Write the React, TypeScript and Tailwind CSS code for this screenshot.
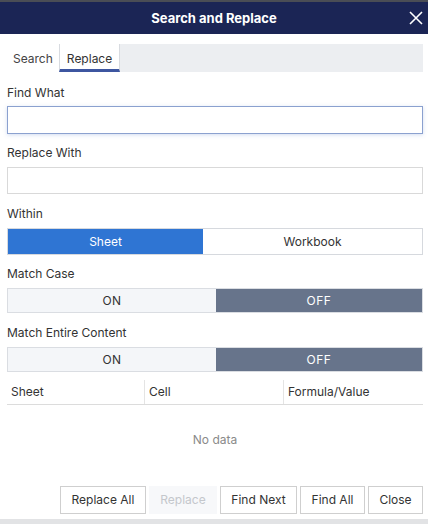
import React from "react";

const font = { fontFamily: "Inter, 'Noto Sans', sans-serif" };

function Seg({ left, right, blue }: { left: string; right: string; blue?: boolean }) {
  if (blue) {
    return (
      <div className="flex h-[27px] border border-[#d6d9de]">
        <div className="w-[195px] flex items-center justify-center bg-[#2f75d3] text-white">{left}</div>
        <div className="flex-1 flex items-center justify-center bg-white text-[#333]">{right}</div>
      </div>
    );
  }
  return (
    <div className="flex h-[25px] border border-[#dadde2] tracking-[0.5px]">
      <div className="w-[208px] flex items-center justify-center bg-[#f4f6f9] text-[#333]">{left}</div>
      <div className="flex-1 flex items-center justify-center bg-[#67748b] text-white">{right}</div>
    </div>
  );
}

export default function App() {
  return (
    <div style={font} className="w-[428px] h-[524px] bg-white flex flex-col text-[12px] leading-4 text-[#333] relative overflow-hidden">
      <div className="h-[2px] bg-[#4a4d55]" />
      <div className="h-[32px] bg-[#1b2555] flex items-center justify-center relative">
        <span className="text-white font-bold text-[13px]">Search and Replace</span>
        <svg className="absolute right-[4px] top-[8px]" width="16" height="16" viewBox="0 0 16 16">
          <path d="M2 2 L14 14 M14 2 L2 14" stroke="white" strokeWidth="1.6" />
        </svg>
      </div>
      <div className="pl-[7px] pr-[5px] pt-[10px]">
        <div className="flex h-[28px]">
          <div className="px-[6px] pt-[2px] flex items-center text-[#444]">Search</div>
          <div className="px-[7px] flex items-center border-l border-r border-[#d8dbe0] border-b-[3px] border-b-[#3d56a0] pt-[4px] text-[#333]">Replace</div>
          <div className="flex-1 bg-[#eceef1]" />
        </div>
        <div className="mt-[13px]">Find What</div>
        <div className="mt-[5px] h-[28px] border border-[#8ba1cf] shadow-[0_1px_4px_rgba(80,120,200,0.25)]" />
        <div className="mt-[11px]">Replace With</div>
        <div className="mt-[6px] h-[27px] border border-[#d9d9d9]" />
        <div className="mt-[12px]">Within</div>
        <div className="mt-[6px]">
          <Seg left="Sheet" right="Workbook" blue />
        </div>
        <div className="mt-[11px]">Match Case</div>
        <div className="mt-[6px]">
          <Seg left="ON" right="OFF" />
        </div>
        <div className="mt-[12px]">Match Entire Content</div>
        <div className="mt-[6px]">
          <Seg left="ON" right="OFF" />
        </div>
        <div className="mt-[8px] flex h-[25px] border-b border-[#dcdcdc]">
          <div className="w-[138px] flex items-center pl-[4px] border-r border-[#e4e4e4]">Sheet</div>
          <div className="w-[139px] flex items-center pl-[4px] border-r border-[#e4e4e4]">Cell</div>
          <div className="flex-1 flex items-center pl-[4px]">Formula/Value</div>
        </div>
        <div className="h-[70px] flex items-center justify-center text-[#8a8a8a]">No data</div>
        <div className="mt-[11px] flex justify-end gap-[3px]">
          <div className="w-[86px] h-[28px] border border-[#cfcfcf] flex items-center justify-center">Replace All</div>
          <div className="w-[68px] h-[28px] bg-[#f7f8fa] text-[#c4c7cc] flex items-center justify-center">Replace</div>
          <div className="w-[77px] h-[28px] border border-[#cfcfcf] flex items-center justify-center">Find Next</div>
          <div className="w-[65px] h-[28px] border border-[#cfcfcf] flex items-center justify-center">Find All</div>
          <div className="w-[55px] h-[28px] border border-[#cfcfcf] flex items-center justify-center">Close</div>
        </div>
      </div>
      <div className="absolute left-0 right-0 bottom-0 h-[5px] bg-[#e2e3e5]" />
    </div>
  );
}
